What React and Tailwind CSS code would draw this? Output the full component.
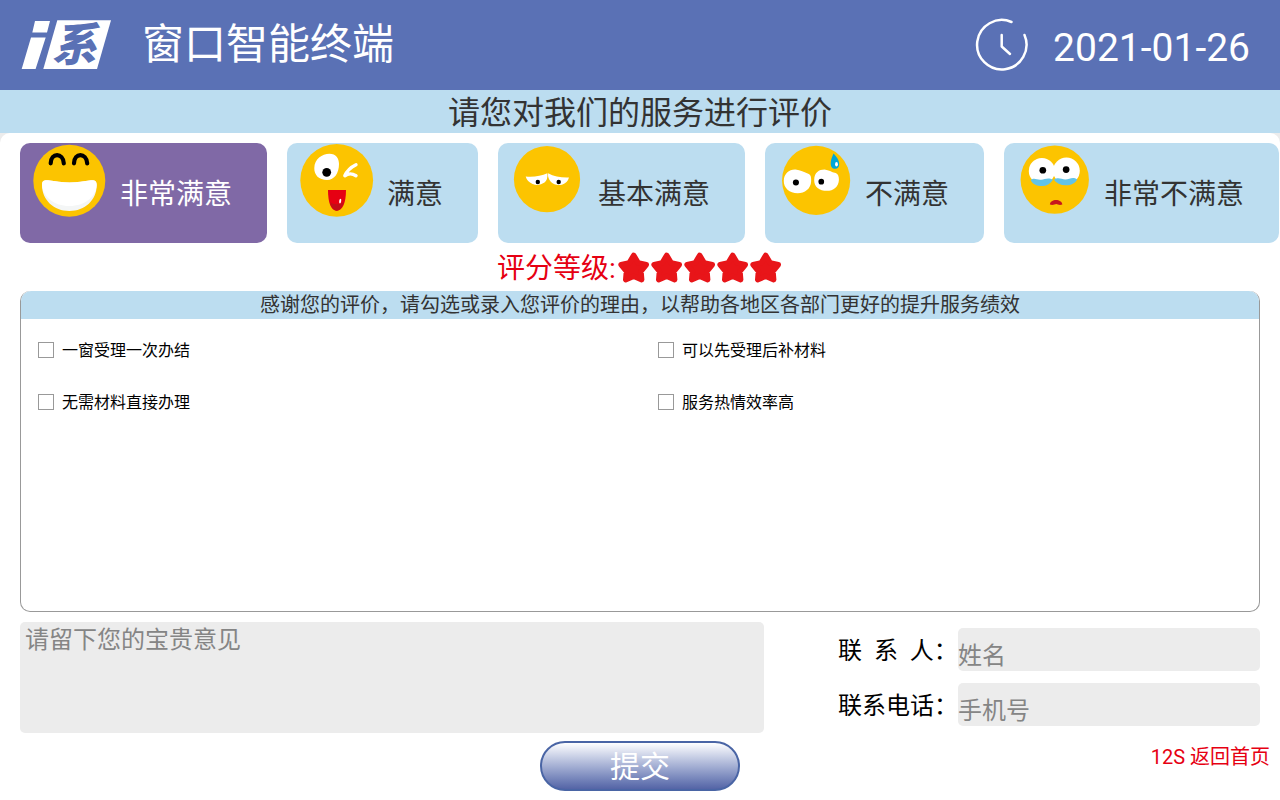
import { useState } from "react";

function Logo() {
  return (
    <svg className="h-[50px] w-[90px] shrink-0 overflow-visible" viewBox="0 0 90 50" role="img" aria-label="i系">
      <path fill="#fff" d="M14 1h15l-3 11.500H11.300zM10 17.500h14.700L14.600 49H.700z" />
      <path fill="#fff" d="M36.300.300H90L76 49H22.300z" />
      <text
        x="31"
        y="41"
        fontSize="45"
        fontWeight="900"
        fontStyle="italic"
        fill="#5a71b5"
        fontFamily="'Noto Sans CJK SC', sans-serif"
      >
        系
      </text>
    </svg>
  );
}

function Clock() {
  return (
    <svg
      className="size-[54px] shrink-0"
      viewBox="0 0 54 54"
      fill="none"
      stroke="#fff"
      strokeWidth="2.500"
      strokeLinecap="round"
      strokeLinejoin="round"
      aria-hidden="true"
    >
      <path d="M36.500 4A24.700 24.700 0 1 0 49.500 17" />
      <path d="M26.700 17v11.500l8.300 7.500" />
    </svg>
  );
}

function Face({ children }) {
  return (
    <svg className="size-20 shrink-0" viewBox="0 0 80 80" aria-hidden="true">
      {children}
    </svg>
  );
}

const yellow = "#fcc400";

function Grin() {
  return (
    <Face>
      <circle cx="39.300" cy="37.700" r="36" fill={yellow} />
      <g fill="none" stroke="#000" strokeWidth="4.200" strokeLinecap="round">
        <path d="M20.700 20.300C21 9.500 33 9.500 33.800 20.300" />
        <path d="M44 20.300C44.300 9.500 56.300 9.500 57.200 20.300" />
      </g>
      <path
        fill="#f4f6f6"
        d="M12 42C12 37.500 14 37 18 37.200C26 38 32 39.500 39.500 39.500C47 39.500 54 38 61 37.200C65 37 66.700 38 66.700 42C66.700 57 55 68 39.300 68C24 68 12 57 12 42Z"
      />
      <path
        fill="#fff"
        d="M12 42C12 37.500 14 37 18 37.200C26 38 32 39.500 39.500 39.500C47 39.500 54 38 61 37.200C65 37 66.700 38 66.700 42C66 54 55 63 39.300 63C24 63 13 54 12 42Z"
      />
    </Face>
  );
}

function Wink() {
  return (
    <Face>
      <circle cx="39.700" cy="37.300" r="36.400" fill={yellow} />
      <path
        fill="#fff"
        d="M17.300 25C17.500 16 25 10.700 32.500 10.700C39 10.700 42 15 42 21C42 30 37.500 37 30 37C22 37 17 32 17.300 25Z"
      />
      <circle cx="29.700" cy="29.300" r="4.400" fill="#000" />
      <path
        d="M59 21.700Q51 25.500 47.800 32.800Q53 29 59 32.700"
        fill="none"
        stroke="#fff"
        strokeWidth="3.400"
        strokeLinecap="round"
        strokeLinejoin="round"
      />
      <path fill="#e60012" d="M31 47H49C49 60 45.500 67.700 39.700 67.700C34 67.700 31 60 31 47Z" />
      <path fill="#c40d18" d="M33 59C36 62 44 62 47 58.500C45.500 64 43 67.700 39.700 67.700C36.500 67.700 34.300 64 33 59Z" />
      <ellipse cx="43.200" cy="58" rx="1" ry="2.400" fill="#fff" transform="rotate(10 43 58)" />
    </Face>
  );
}

function Tired() {
  return (
    <Face>
      <circle cx="39" cy="36.200" r="33.100" fill={yellow} />
      <path fill="#fff" d="M17.700 33.500Q30 34.500 39.400 30.200Q40 36.500 36.500 39.500Q31 43.500 24.500 41Q19 38.500 17.700 33.500Z" />
      <path fill="#fff" d="M40.100 30.200Q49 35 61 34.500Q59.500 40 54 41.700Q47 43 43 39Q39.500 35 40.100 30.200Z" />
      <circle cx="29.800" cy="39" r="2.200" fill="#000" />
      <circle cx="50.700" cy="39" r="2.200" fill="#000" />
    </Face>
  );
}

function Sweat() {
  return (
    <Face>
      <g transform="matrix(1.014 0 0 1.014 0.350 0.180)">
        <ellipse cx="40.200" cy="36.700" rx="33.600" ry="34.100" fill={yellow} />
        <path
          fill="#fff"
          d="M8.300 37C8.500 30 14 25.500 20 26C25 26.500 28 28.500 33 30.500C35 31.500 35.500 34 35.300 37.500C35 45 29 49.300 22 49.300C14 49.300 8 44 8.300 37Z"
        />
        <path
          fill="#fff"
          d="M38.300 36C38.500 29 43 26 48.500 26C53 26.500 55 28.500 59.500 29.500C62 30.500 62.700 33 62.700 36C62.500 43 57 47 51 47C43.500 47 38 43 38.300 36Z"
        />
        <circle cx="20.300" cy="38.700" r="3" fill="#000" />
        <circle cx="45.300" cy="38" r="2.800" fill="#000" />
        <path fill="#00a6d6" d="M57.300 10.300C60 13 63 17 63 20.500C63 23.500 61.500 25.300 59 25.300C56 25.300 54.500 23 54.600 19.500C54.700 16 56.500 13 57.300 10.300Z" />
        <ellipse cx="60.300" cy="20.700" rx="1.400" ry="2.200" fill="#fff" />
      </g>
    </Face>
  );
}

function Crying() {
  return (
    <Face>
      <g transform="matrix(1.014 0 0 1.014 3.750 0.180)">
        <circle cx="36.500" cy="36" r="33.700" fill={yellow} />
        <circle cx="23.800" cy="27.500" r="12.900" fill="#fff" />
        <circle cx="48" cy="27.300" r="13.200" fill="#fff" />
        <path fill="#62c3e8" d="M12.800 36.500C16 33.500 19 36.500 23 36C27 35.500 30 33.500 34.800 36C32 40 28.500 42.300 24 42.300C18.500 42.300 14.500 40 12.800 36.500Z" />
        <path fill="#62c3e8" d="M35.600 36C40 33 43 35.800 47 35.800C51 35.800 54 32.500 58.700 35.800C56.500 39.500 53 41.500 47.500 41.500C42 41.500 38 39.500 35.600 36Z" />
        <circle cx="24.700" cy="26.700" r="3.300" fill="#000" />
        <circle cx="47.700" cy="26" r="3.300" fill="#000" />
        <path fill="#c7161d" d="M31.700 60.500C32 54.500 43.500 54.500 44 60.500C40.500 61.500 39.500 60 38 60C36.500 60 35 61.500 31.700 60.500Z" />
      </g>
    </Face>
  );
}

function Star() {
  return (
    <svg className="h-8 w-[33px]" viewBox="0 0 33 32" aria-hidden="true">
      <path
        d="M15.700 4.300L20.200 11.800L28.300 13.700L23 20.200L23.700 28.700L15.700 25.300L7.700 28.700L8.400 20.200L3.100 13.700L11.200 11.800Z"
        fill="#e81519"
        stroke="#e81519"
        strokeWidth="5.400"
        strokeLinejoin="round"
      />
    </svg>
  );
}

const ratings = [
  { label: "非常满意", Icon: Grin },
  { label: "满意", Icon: Wink },
  { label: "基本满意", Icon: Tired },
  { label: "不满意", Icon: Sweat },
  { label: "非常不满意", Icon: Crying },
];

const reasons = ["一窗受理一次办结", "可以先受理后补材料", "无需材料直接办理", "服务热情效率高"];

const labelClass = "w-[120px] pt-0.5 text-2xl";

const fieldClass =
  "h-[43px] min-w-0 flex-1 rounded-[5px] bg-[#ececec] pt-3 text-2xl leading-[31px] outline-none placeholder:text-[#858585] placeholder:opacity-100";

export default function App() {
  const [selected, setSelected] = useState(0);

  return (
    <div className="flex min-h-screen flex-col bg-[#ececec] font-[Roboto,'Noto_Sans_CJK_SC',sans-serif] text-black">
      <header className="flex h-[90px] items-center justify-between bg-[#5a71b5] pr-[30px] pl-[21px] text-white">
        <div className="flex items-center gap-[31px]">
          <Logo />
          <h1 className="text-[42px] leading-[48px] font-normal">窗口智能终端</h1>
        </div>
        <div className="flex items-center gap-6">
          <Clock />
          <time className="pt-1.5 text-[39px] leading-[48px]" dateTime="2021-01-26">
            2021-01-26
          </time>
        </div>
      </header>

      <h2 className="bg-[#bcddf0] pt-1 text-center text-[32px] leading-[39px] font-normal text-[#333]">
        请您对我们的服务进行评价
      </h2>

      <main className="flex flex-1 flex-col rounded-t-[10px] bg-white pt-2.5 pb-[9px]">
        <div className="flex flex-wrap gap-5 pl-5">
          {ratings.map(({ label, Icon }, i) => (
            <button
              key={label}
              type="button"
              aria-pressed={selected === i}
              onClick={() => setSelected(i)}
              className={
                "flex h-[100px] items-start gap-2.5 rounded-[10px] pr-[35px] pl-2.5 text-[28px] whitespace-nowrap " +
                (selected === i ? "bg-[#8069a6] text-white" : "bg-[#bcddf0] text-[#333]")
              }
            >
              <Icon />
              <span className="pt-1 leading-[96px]">{label}</span>
            </button>
          ))}
        </div>

        <div className="flex h-12 items-center justify-center gap-0.5 text-[28px] text-[#e60012]">
          <span className="pt-1">评分等级:</span>
          <span className="flex" role="img" aria-label="5 星">
            {[1, 2, 3, 4, 5].map((n) => (
              <Star key={n} />
            ))}
          </span>
        </div>

        <fieldset className="mx-5 flex flex-1 flex-col overflow-hidden rounded-[10px] border border-t-0 border-[#999]">
          <p className="bg-[#bcddf0] pt-px text-center text-xl leading-[27px] text-[#333]">
            感谢您的评价，请勾选或录入您评价的理由，以帮助各地区各部门更好的提升服务绩效
          </p>
          <div className="-mx-px grid grid-cols-2 gap-y-7 py-5">
            {reasons.map((reason) => (
              <label key={reason} className="flex items-center gap-2 pl-[18px] text-base leading-6">
                <input
                  type="checkbox"
                  className="mb-0.5 size-4 appearance-none border border-[#999] bg-white checked:bg-[#5a71b5]"
                />
                {reason}
              </label>
            ))}
          </div>
        </fieldset>

        <div className="mx-5 mt-2.5 flex justify-between">
          <textarea
            aria-label="宝贵意见"
            placeholder="请留下您的宝贵意见"
            className="h-[111px] w-3/5 resize-none rounded-[5px] bg-[#ececec] px-[5px] pt-px text-2xl leading-[35px] outline-none placeholder:text-[#858585] placeholder:opacity-100"
          />
          <div className="flex w-[422px] flex-col gap-3 pt-1.5">
            <div className="flex items-center">
              <label htmlFor="contact-name" className={labelClass}>
                联&nbsp;&nbsp;系&nbsp;&nbsp;人：
              </label>
              <input id="contact-name" type="text" placeholder="姓名" className={fieldClass} />
            </div>
            <div className="flex items-center">
              <label htmlFor="contact-phone" className={labelClass}>
                联系电话：
              </label>
              <input id="contact-phone" type="tel" placeholder="手机号" className={fieldClass} />
            </div>
          </div>
        </div>

        <div className="mt-2 grid grid-cols-[1fr_auto_1fr] items-start">
          <button
            type="submit"
            className="col-start-2 h-[50px] w-[200px] rounded-full border-2 border-[#4a65a5] bg-linear-to-b from-white to-[#5464a6] pt-0.5 text-[30px] leading-[44px] text-white"
          >
            提交
          </button>
          <a href="#home" className="mr-2.5 justify-self-end text-xl leading-8 text-[#e60012]">
            12S 返回首页
          </a>
        </div>
      </main>
    </div>
  );
}
